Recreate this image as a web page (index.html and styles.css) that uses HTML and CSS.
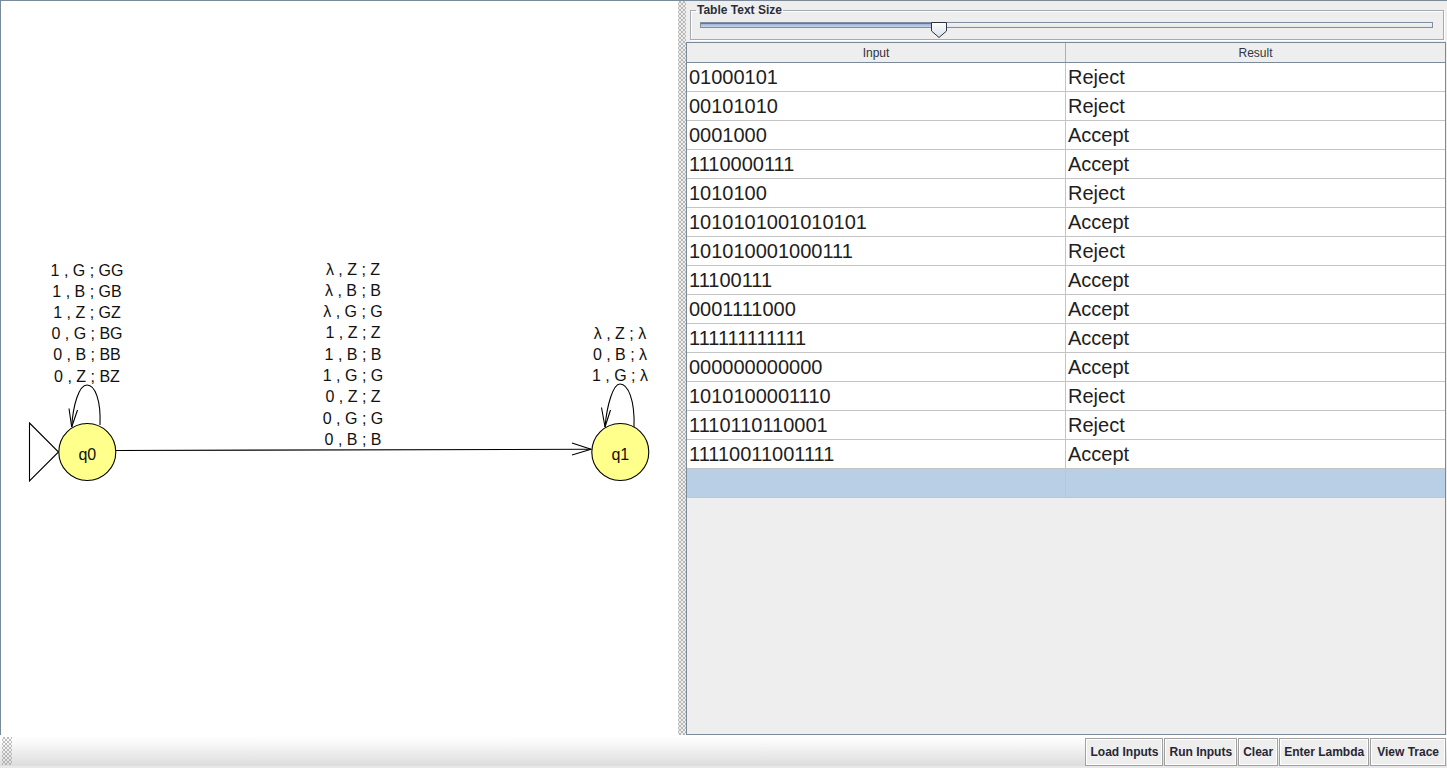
FILE: index.html
```html
<!DOCTYPE html>
<html>
<head>
<meta charset="utf-8">
<title>JFLAP Multiple Run</title>
<link rel="stylesheet" href="styles.css">
</head>
<body>
<div class="app">
  <div class="main">
    <div class="canvas">
      <svg class="diagram" width="677" height="734" viewBox="1 1 677 734" xmlns="http://www.w3.org/2000/svg">
        <!-- q0 self loop -->
        <path class="edge" d="M 71.7 427 C 73 405 79 385 87 385 C 95 385 101 400 100 425"/>
        <path class="edge" d="M 69 408.5 L 71.7 427 L 77.5 410"/>
        <!-- q1 self loop -->
        <path class="edge" d="M 605 427 C 607 405 613 384 620 384 C 628 384 635 400 634 427"/>
        <path class="edge" d="M 601.5 407.5 L 605 427 L 610.5 410"/>
        <!-- q0 -> q1 -->
        <path class="edge" d="M 116 450.5 L 591 449.3"/>
        <path class="edge" d="M 572 443 L 591 449.3 L 572 455"/>
        <!-- initial arrow -->
        <path class="edge" d="M 29.5 423 L 58.5 452 L 29.5 481 Z"/>
        <!-- states -->
        <circle class="state" cx="87.3" cy="452" r="28.5"/>
        <circle class="state" cx="620.3" cy="452" r="28.5"/>
        <text class="slabel" x="87.3" y="460">q0</text>
        <text class="slabel" x="620.3" y="460">q1</text>
        <!-- q0 loop labels -->
        <text class="lbl" x="87" y="275.5">1 , G ; GG</text>
        <text class="lbl" x="87" y="296.7">1 , B ; GB</text>
        <text class="lbl" x="87" y="317.9">1 , Z ; GZ</text>
        <text class="lbl" x="87" y="339.1">0 , G ; BG</text>
        <text class="lbl" x="87" y="360.3">0 , B ; BB</text>
        <text class="lbl" x="87" y="381.5">0 , Z ; BZ</text>
        <!-- transition labels -->
        <text class="lbl" x="353" y="274.5">λ , Z ; Z</text>
        <text class="lbl" x="353" y="295.8">λ , B ; B</text>
        <text class="lbl" x="353" y="317.1">λ , G ; G</text>
        <text class="lbl" x="353" y="338.4">1 , Z ; Z</text>
        <text class="lbl" x="353" y="359.7">1 , B ; B</text>
        <text class="lbl" x="353" y="381">1 , G ; G</text>
        <text class="lbl" x="353" y="402.3">0 , Z ; Z</text>
        <text class="lbl" x="353" y="423.6">0 , G ; G</text>
        <text class="lbl" x="353" y="444.9">0 , B ; B</text>
        <!-- q1 loop labels -->
        <text class="lbl" x="620" y="339">λ , Z ; λ</text>
        <text class="lbl" x="620" y="360.2">0 , B ; λ</text>
        <text class="lbl" x="620" y="381.4">1 , G ; λ</text>
      </svg>
    </div>
    <div class="splitter"></div>
    <div class="side">
      <fieldset class="sizebox">
        <legend>Table Text Size</legend>
        <div class="slider">
          <div class="track"><div class="track-fill" style="width:232px"></div></div>
          <svg class="thumb" style="left:231px" width="17" height="17" viewBox="0 0 17 17" xmlns="http://www.w3.org/2000/svg">
            <defs>
              <linearGradient id="tg" x1="0" y1="0" x2="0" y2="1">
                <stop offset="0" stop-color="#ffffff"/>
                <stop offset="1" stop-color="#d5dfeb"/>
              </linearGradient>
            </defs>
            <path d="M 0.5 0.5 L 15.5 0.5 L 15.5 9 L 8 15.5 L 0.5 9 Z" fill="url(#tg)" stroke="#2e3440" stroke-width="1"/>
          </svg>
        </div>
      </fieldset>
      <div class="tablepane">
        <div class="thead">
          <div class="th c1">Input</div>
          <div class="th c2">Result</div>
        </div>
        <div class="row"><div class="td c1">01000101</div><div class="td c2">Reject</div></div>
        <div class="row"><div class="td c1">00101010</div><div class="td c2">Reject</div></div>
        <div class="row"><div class="td c1">0001000</div><div class="td c2">Accept</div></div>
        <div class="row"><div class="td c1">1110000111</div><div class="td c2">Accept</div></div>
        <div class="row"><div class="td c1">1010100</div><div class="td c2">Reject</div></div>
        <div class="row"><div class="td c1">1010101001010101</div><div class="td c2">Accept</div></div>
        <div class="row"><div class="td c1">101010001000111</div><div class="td c2">Reject</div></div>
        <div class="row"><div class="td c1">11100111</div><div class="td c2">Accept</div></div>
        <div class="row"><div class="td c1">0001111000</div><div class="td c2">Accept</div></div>
        <div class="row"><div class="td c1">111111111111</div><div class="td c2">Accept</div></div>
        <div class="row"><div class="td c1">000000000000</div><div class="td c2">Accept</div></div>
        <div class="row"><div class="td c1">1010100001110</div><div class="td c2">Reject</div></div>
        <div class="row"><div class="td c1">1110110110001</div><div class="td c2">Reject</div></div>
        <div class="row"><div class="td c1">11110011001111</div><div class="td c2">Accept</div></div>
        <div class="row selected"><div class="td c1"></div><div class="td c2"></div></div>
      </div>
    </div>
  </div>
  <div class="bottombar">
    <div class="grip"></div>
    <div class="buttons">
      <button class="btn">Load Inputs</button>
      <button class="btn">Run Inputs</button>
      <button class="btn">Clear</button>
      <button class="btn">Enter Lambda</button>
      <button class="btn wide">View Trace</button>
    </div>
  </div>
</div>
</body>
</html>
```

FILE: styles.css
```css
* { box-sizing: border-box; }

html, body {
  margin: 0;
  padding: 0;
  width: 1447px;
  height: 768px;
  overflow: hidden;
  background: #eeeeee;
  font-family: "Liberation Sans", Arial, sans-serif;
}

.app {
  display: flex;
  flex-direction: column;
  width: 1447px;
  height: 768px;
}

.main {
  display: flex;
  height: 735px;
  border-top: 1px solid #7a8a99;
}

.canvas {
  width: 678px;
  height: 734px;
  background: #ffffff;
  border-left: 1px solid #7a8a99;
}

.diagram { display: block; }

.edge {
  fill: none;
  stroke: #000000;
  stroke-width: 1.1;
}

.state {
  fill: #ffff8c;
  stroke: #000000;
  stroke-width: 1.1;
}

.lbl, .slabel {
  font-family: "Liberation Sans", Arial, sans-serif;
  font-size: 16px;
  fill: #111111;
  text-anchor: middle;
}

.splitter {
  width: 8px;
  height: 734px;
  background-color: #eeeeee;
  background-image:
    radial-gradient(circle at 1px 1px, #9a9a9a 0.6px, transparent 0.9px),
    radial-gradient(circle at 1px 1px, #9a9a9a 0.6px, transparent 0.9px);
  background-size: 4px 4px, 4px 4px;
  background-position: 1px 0, 3px 2px;
}

.side {
  width: 761px;
  height: 734px;
  display: flex;
  flex-direction: column;
  padding-top: 2px;
}

.sizebox {
  margin: 0 3px 0 4px;
  padding: 0 5px 1px 5px;
  border: 1px solid #a4aab2;
  box-shadow: inset 1px 1px 0 #ffffff, 1px 1px 0 #ffffff;
  min-width: 0;
}

.sizebox legend {
  padding: 0 1px;
  font-size: 12px;
  line-height: 14px;
  font-weight: bold;
  color: #2a2e3a;
}

.slider {
  position: relative;
  height: 16px;
  margin: 1px 5px 0 4px;
}

.track {
  position: relative;
  margin-top: 5px;
  height: 6px;
  border: 1px solid #7f8ea0;
  background: linear-gradient(#f4f4f4, #e6e6e6);
}

.track-fill {
  height: 4px;
  background: linear-gradient(#9db4d4, #c6d6ec);
  border-top: 1px solid #5f7898;
}

.thumb {
  position: absolute;
  top: 0;
}

.tablepane {
  margin: 2px 1px 0 0;
  flex: 1;
  border: 1px solid #7a8a99;
  background: #eeeeee;
  overflow: hidden;
}

.thead {
  display: flex;
  height: 20px;
  border-bottom: 1px solid #7a8a99;
  background: #eeeeee;
}

.th {
  font-size: 12px;
  color: #333340;
  text-align: center;
  line-height: 20px;
  padding-top: 0;
}

.c1 {
  width: 379px;
  border-right: 1px solid #a9b0b8;
}

.c2 {
  flex: 1;
}

.row {
  display: flex;
  height: 29px;
  background: #ffffff;
  border-bottom: 1px solid #c4c4c4;
}

.row .c1 { border-right-color: #c4c4c4; }

.row.selected { background: #b8cfe5; }

.td {
  font-size: 20px;
  line-height: 28px;
  color: #1e1e1e;
  padding-left: 2px;
  white-space: nowrap;
}

.bottombar {
  height: 33px;
  display: flex;
  justify-content: space-between;
  background: linear-gradient(#ffffff 0px, #fbfbfb 6px, #dedede 30px);
  border-bottom: 2px solid #e8e8e8;
}

.grip {
  width: 10px;
  margin: 2px 0 0 2px;
  height: 28px;
  background-image:
    radial-gradient(circle at 1px 1px, #9a9a9a 0.6px, transparent 0.9px),
    radial-gradient(circle at 1px 1px, #9a9a9a 0.6px, transparent 0.9px);
  background-size: 4px 4px, 4px 4px;
  background-position: 1px 0, 3px 2px;
}

.buttons {
  display: flex;
  gap: 1px;
  padding: 3px 1px 0 0;
}

.btn {
  height: 28px;
  margin: 0;
  padding: 0 4px;
  font-family: "Liberation Sans", Arial, sans-serif;
  font-size: 12px;
  font-weight: bold;
  color: #262636;
  background: #eeeeee;
  border: 1px solid #a0a0a0;
  box-shadow: inset 0 0 0 1px #ffffff;
  border-radius: 0;
}

.btn.wide { padding: 0 6px; }
```
